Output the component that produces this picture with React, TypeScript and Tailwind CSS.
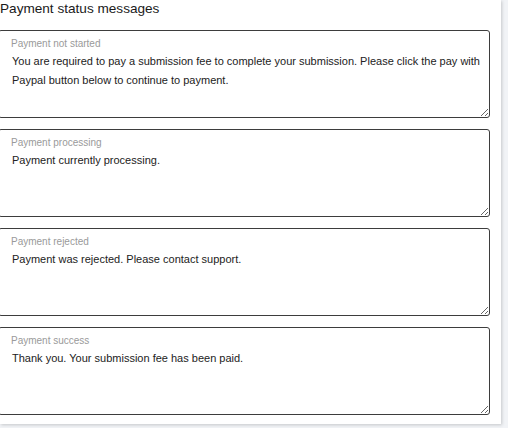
import React from 'react'

const messages = [
  {
    label: 'Payment not started',
    text: 'You are required to pay a submission fee to complete your submission. Please click the pay with Paypal button below to continue to payment.',
  },
  { label: 'Payment processing', text: 'Payment currently processing.' },
  { label: 'Payment rejected', text: 'Payment was rejected. Please contact support.' },
  { label: 'Payment success', text: 'Thank you. Your submission fee has been paid.' },
]

function StatusField({ label, text }: { label: string; text: string }) {
  return (
    <div className="relative">
      <label className="absolute left-[13px] top-[8px] text-[10px] leading-[12px] text-[#9a9a9a] pointer-events-none">
        {label}
      </label>
      <textarea
        readOnly
        defaultValue={text}
        className="block w-full h-[88px] rounded-[3px] border border-[#3d3d3d] bg-white pl-[13px] pr-[2px] pt-[21px] text-[11px] leading-[19px] text-[#222] outline-none"
      />
    </div>
  )
}

export default function App() {
  return (
    <div className="w-[508px] h-[428px] bg-[#f1f3f6] overflow-hidden font-['Liberation_Sans',Arial,sans-serif]">
      <div className="w-[501px] bg-white pb-[9px] pr-[11px] shadow-[1px_1px_3px_rgba(0,0,0,0.18)]">
        <h2 className="text-[13.6px] leading-[18px] text-[#1a1a1a] font-normal">Payment status messages</h2>
        <div className="mt-[12px] -ml-[2px] flex flex-col gap-[11px]">
          {messages.map((m) => (
            <StatusField key={m.label} label={m.label} text={m.text} />
          ))}
        </div>
      </div>
    </div>
  )
}
